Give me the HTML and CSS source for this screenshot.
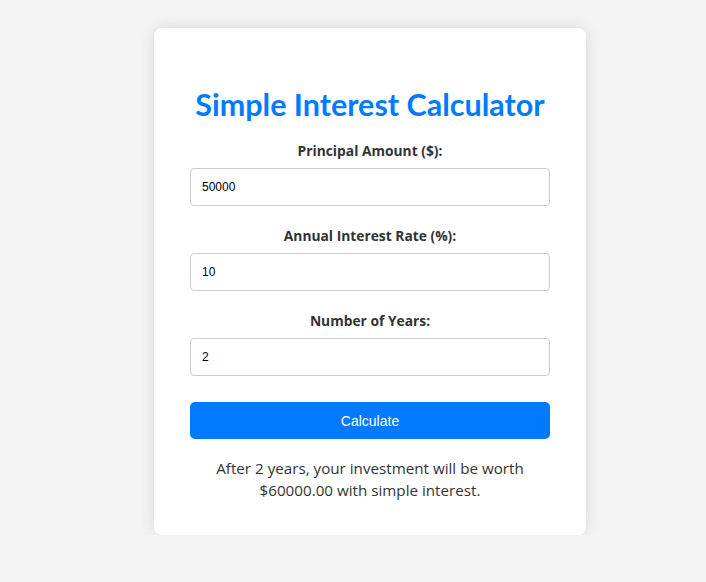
FILE: index.html
```html
<!DOCTYPE html>
<html lang="en">
<head>
    <meta charset="UTF-8">
    <meta name="viewport" content="width=device-width, initial-scale=1.0">
    <title>Simple Interest Calculator</title>
    <link rel="stylesheet" href="styles.css">
</head>
<body>
    <div class="container">
        <h1>Simple Interest Calculator</h1>
        <form id="calcForm">
            <div class="field">
                <label for="principal">Principal Amount ($):</label>
                <input type="number" id="principal" value="50000">
            </div>
            <div class="field">
                <label for="rate">Annual Interest Rate (%):</label>
                <input type="number" id="rate" value="10">
            </div>
            <div class="field">
                <label for="years">Number of Years:</label>
                <input type="number" id="years" value="2">
            </div>
            <button type="submit">Calculate</button>
        </form>
        <p class="result" id="result">After 2 years, your investment will be worth $60000.00 with simple interest.</p>
    </div>
</body>
</html>
```

FILE: styles.css
```css
body {
    font-family: "Open Sans", "Noto Sans", sans-serif;
    background-color: #f4f4f4;
    margin: 0;
    padding: 28px 0 0 34px;
    display: flex;
    justify-content: center;
}

.container {
    width: 360px;
    background: white;
    padding: 56px 36px 34px;
    border-radius: 8px;
    box-shadow: 0 0 15px rgba(0, 0, 0, 0.12);
}

h1 {
    margin: 0 0 18px;
    font-family: Lato, "Open Sans", sans-serif;
    font-size: 30.5px;
    line-height: 40px;
    color: #007bff;
    text-align: center;
    font-weight: 700;
    white-space: nowrap;
}

.field {
    margin-bottom: 21px;
}

.field:last-of-type {
    margin-bottom: 26px;
}

label {
    display: block;
    margin-bottom: 9px;
    font-size: 13.8px;
    line-height: 17px;
    font-weight: 700;
    color: #333;
    text-align: center;
}

input {
    display: block;
    box-sizing: border-box;
    width: 100%;
    height: 38px;
    padding: 0 11px;
    border: 1px solid #ccc;
    border-radius: 4px;
    font-family: "Liberation Sans", Arial, sans-serif;
    font-size: 12px;
    color: #000;
}

input::-webkit-inner-spin-button {
    -webkit-appearance: none;
}

button {
    display: block;
    width: 100%;
    height: 37px;
    background-color: #007bff;
    color: white;
    border: none;
    border-radius: 5px;
    font-family: "Liberation Sans", Arial, sans-serif;
    font-size: 14px;
    cursor: pointer;
}

.result {
    margin: 18px 0 0;
    font-size: 15.2px;
    line-height: 22px;
    color: #333;
    text-align: center;
}
```
